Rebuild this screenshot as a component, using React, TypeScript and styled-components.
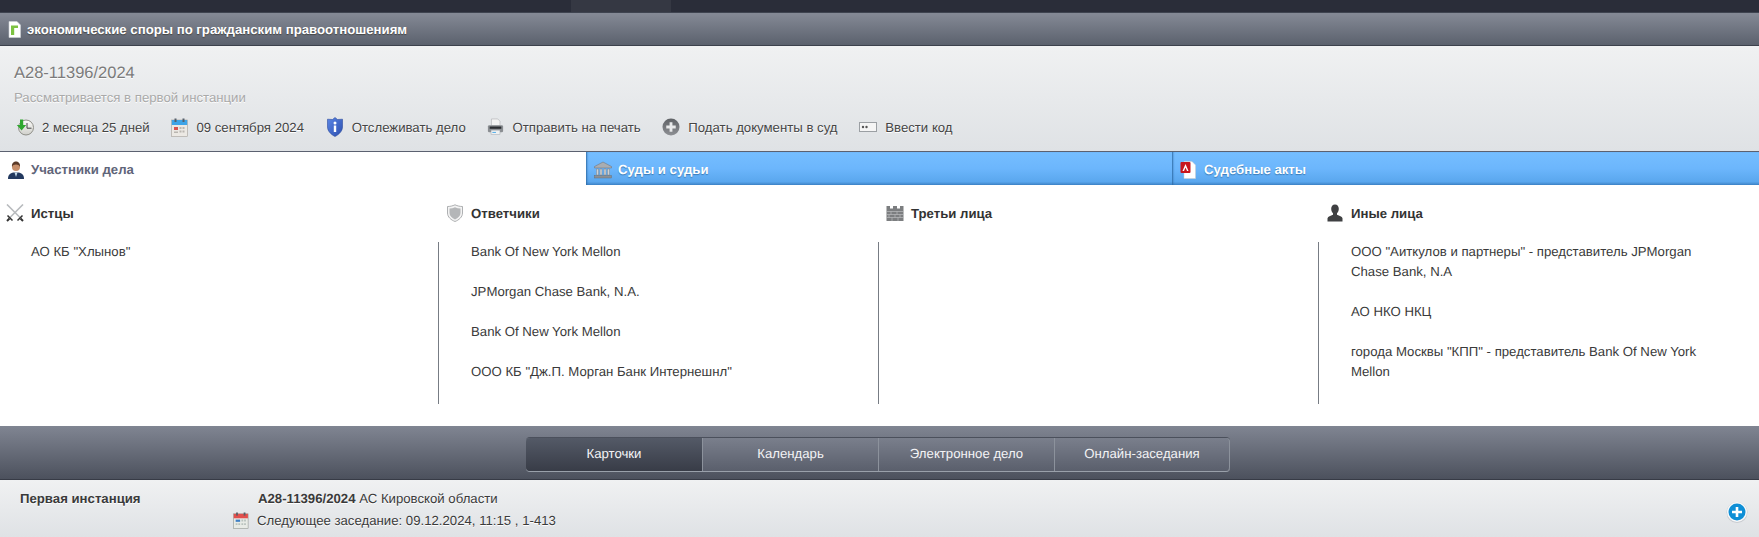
import React from "react";
import styled, { createGlobalStyle } from "styled-components";

const Global = createGlobalStyle`
  html, body { margin: 0; padding: 0; background: #fff; }
  body {
    font-family: "Liberation Sans", Arial, sans-serif;
    font-size: 13.2px;
    color: #333;
    overflow: hidden;
    text-rendering: geometricPrecision;
  }
`;

const Page = styled.div`
  width: 1759px;
  height: 537px;
  overflow: hidden;
  display: flex;
  flex-direction: column;
`;

const TopStrip = styled.div`
  height: 13px;
  background: #2a2d39;
  display: flex;
  padding-left: 571px;
`;
const TopSegment = styled.div`
  width: 100px;
  background: #353843;
`;

const CategoryBar = styled.div`
  height: 32px;
  box-sizing: content-box;
  border-top: 1px solid #3f4450;
  border-bottom: 1px solid #3c414c;
  margin-top: -1px;
  background: linear-gradient(#858a96, #5b616d);
  display: flex;
  align-items: center;
  padding-left: 8px;
  gap: 6px;
`;
const CategoryTitle = styled.span`
  font-size: 13.2px;
  font-weight: bold;
  color: #fff;
  text-shadow: 0 1px 1px #444;
  line-height: 16px;
  padding-top: 1px;
`;

const CaseHead = styled.div`
  height: 106px;
  box-sizing: border-box;
  padding: 17px 0 0 14px;
  background: linear-gradient(#f0f1f2, #dfe2e5);
  border-bottom: 1px solid #5b6170;
`;
const CaseNumber = styled.div`
  font-size: 16.5px;
  line-height: 21px;
  color: #7b7b7b;
  text-shadow: 0 1px 0 #fff;
`;
const CaseStatus = styled.div`
  font-size: 13.2px;
  line-height: 16px;
  margin-top: 6px;
  color: #a9a9a9;
  text-shadow: 0 1px 0 #fff;
`;
const Actions = styled.div`
  display: flex;
  margin-top: 11px;
  margin-left: 2px;
  height: 20px;
  align-items: center;
`;
const Action = styled.div`
  display: flex;
  align-items: center;
  gap: 8px;
  margin-right: 21.7px;
  font-size: 13.2px;
  color: #444;
  text-shadow: 0 1px 0 #fff;
  white-space: nowrap;
`;

const Tabs = styled.div`
  display: grid;
  grid-template-columns: 586px 586px 587px;
  height: 33px;
`;
const Tab = styled.div<{ $active?: boolean }>`
  display: flex;
  align-items: center;
  box-sizing: border-box;
  gap: 6px;
  font-size: 13.2px;
  font-weight: bold;
  padding: 2px 0 0 ${(p) => (p.$active ? 7 : 8)}px;
  color: ${(p) => (p.$active ? "#5f6579" : "#fff")};
  background: ${(p) =>
    p.$active ? "#fff" : "linear-gradient(#75beff 0%, #6cb6fc 50%, #5aa7ee 90%, #3d83c6 100%)"};
  box-shadow: ${(p) => (p.$active ? "none" : "inset 2px 0 2px -1px #2f6ca6")};
  text-shadow: ${(p) => (p.$active ? "none" : "0 1px 1px #3b7ab5")};
`;

const Columns = styled.div`
  display: grid;
  grid-template-columns: 440px 440px 440px 439px;
  height: 241px;
  background: #fff;
`;
const Column = styled.div`
  display: flex;
  flex-direction: column;
  padding-top: 18px;
`;
const ColumnHead = styled.div`
  display: flex;
  align-items: center;
  gap: 7px;
  height: 20px;
  padding-left: 6px;
  font-size: 13.2px;
  font-weight: bold;
  color: #333;
`;
const ColumnBody = styled.div<{ $rule?: boolean }>`
  margin-top: 19px;
  margin-right: 1px;
  height: 162px;
  box-sizing: border-box;
  padding: 0 ${(p) => (p.$rule ? 10 : 40)}px 0 31px;
  border-right: 1px solid ${(p) => (p.$rule ? "#777c84" : "transparent")};
`;
const Party = styled.div`
  font-size: 13.2px;
  line-height: 20px;
  color: #3a3a3a;
  margin-bottom: 20px;
`;

const BottomNav = styled.div`
  height: 54px;
  box-sizing: border-box;
  border-bottom: 1px solid #373b46;
  background: linear-gradient(#808592, #4c515d);
  display: flex;
  justify-content: center;
  align-items: flex-start;
  padding-top: 11px;
  padding-right: 3px;
`;
const Segments = styled.div`
  display: flex;
  height: 34px;
  border-radius: 4px;
  box-shadow: 0 1px 0 #99a0aa;
  border-top: 1px solid #4b505c;
  box-sizing: border-box;
`;
const Segment = styled.div<{ $active?: boolean; $last?: boolean }>`
  width: ${(p) => (p.$active ? 177 : p.$last ? 175 : 176)}px;
  box-sizing: border-box;
  display: flex;
  align-items: center;
  justify-content: center;
  font-size: 13.2px;
  color: #f3f3f5;
  padding-bottom: 2px;
  border-right: 1px solid #8c929c;
  border-radius: ${(p) => (p.$active ? "4px 0 0 4px" : p.$last ? "0 4px 4px 0" : "0")};
  background: ${(p) =>
    p.$active ? "linear-gradient(#545a67, #383c47)" : "linear-gradient(#7a7f8c, #5a5f6c)"};
`;

const Footer = styled.div`
  flex: 1;
  background: linear-gradient(#f0f1f2, #dfe2e5);
  display: grid;
  grid-template-columns: 233px 1fr 33px;
  padding-top: 10px;
  box-sizing: border-box;
`;
const InstanceLabel = styled.div`
  font-size: 13.2px;
  font-weight: bold;
  line-height: 18px;
  color: #3a3a3a;
  padding-left: 20px;
  text-shadow: 0 1px 0 #fff;
`;
const InstanceInfo = styled.div`
  font-size: 13.2px;
  color: #3a3a3a;
  text-shadow: 0 1px 0 #fff;
`;
const InstanceLine = styled.div`
  line-height: 18px;
  padding-left: 25px;
  b { font-weight: bold; }
`;
const NextHearing = styled.div`
  display: flex;
  align-items: center;
  gap: 8px;
  height: 20px;
  margin-top: 2px;
`;
const AddSlot = styled.div`
  padding-top: 11px;
`;

const Doc = () => (
  <svg width="13" height="17" viewBox="0 0 13 17">
    <path d="M1 .5h8l3.500 3.500v12.500H1z" fill="#fff" stroke="#cfd3d6" strokeWidth=".6" />
    <path d="M3 4.500h7v2.600H6.200V14H3z" fill="#7dc242" />
  </svg>
);
const Clock = () => (
  <svg width="18" height="18" viewBox="0 0 18 18">
    <defs>
      <linearGradient id="clockFace" x1="0" y1="0" x2="0" y2="1">
        <stop offset="0" stopColor="#fcfcfa" />
        <stop offset="1" stopColor="#cfcfca" />
      </linearGradient>
    </defs>
    <circle cx="10" cy="9.500" r="7.500" fill="url(#clockFace)" stroke="#8f8f88" strokeWidth="1" />
    <path d="M11 5v5.200h4.500" fill="none" stroke="#444" strokeWidth="1" />
    <path d="M4 1.500h3.200v5.500h3L5.600 12.500 .8 7h3.200z" fill="#2fa82f" />
  </svg>
);
const CalendarBlue = () => (
  <svg width="17" height="19" viewBox="0 0 17 19">
    <rect x=".5" y="2" width="16" height="16.500" fill="#ece9e4" stroke="#a5a09a" strokeWidth=".6" />
    <rect x=".8" y="2" width="15.400" height="5" fill="#3ea4e8" />
    <rect x="3.500" y=".5" width="2" height="3.500" fill="#55606c" />
    <rect x="11.500" y=".5" width="2" height="3.500" fill="#55606c" />
    <rect x="3" y="9" width="4" height="3" fill="#d9534f" />
    <path d="M8.500 9h2v2h-2zM11.500 9h2v2h-2zM8.500 12.500h2v2h-2zM11.500 12.500h2v2h-2zM3 13.500h4v1.500H3z" fill="#b9b6b0" />
  </svg>
);
const ShieldInfo = () => (
  <svg width="18" height="20" viewBox="0 0 18 20">
    <defs>
      <linearGradient id="shieldBlue" x1="0" y1="0" x2="1" y2="1">
        <stop offset="0" stopColor="#5b86e6" />
        <stop offset="1" stopColor="#2c4fae" />
      </linearGradient>
    </defs>
    <path d="M9 .5l2.500 2 5-.3V10c0 4-3.500 7.500-7.500 9.500C5 17.500 1.500 14 1.500 10V2.200l5 .3z" fill="url(#shieldBlue)" stroke="#2d4b9e" strokeWidth=".6" />
    <circle cx="9" cy="6" r="1.500" fill="#fff" />
    <rect x="7.800" y="8.500" width="2.400" height="6.500" fill="#fff" />
  </svg>
);
const Printer = () => (
  <svg width="17" height="18" viewBox="0 0 19 19">
    <path d="M5 .5h7l2.500 2.500V8H5z" fill="#f3f3f3" stroke="#a6a9ad" strokeWidth=".6" />
    <rect x="1" y="7.500" width="17" height="8" rx="1.500" fill="#8a8e92" />
    <rect x="3" y="9" width="13" height="2.500" fill="#2b2e32" />
    <rect x="4.500" y="13" width="10" height="5" fill="#eef1f2" stroke="#9ba0a4" strokeWidth=".5" />
    <rect x="6" y="15" width="4" height="1" fill="#3ea4e8" />
  </svg>
);
const PlusGray = () => (
  <svg width="18" height="18" viewBox="0 0 19 19">
    <defs>
      <linearGradient id="plusGray" x1="0" y1="0" x2="0" y2="1">
        <stop offset="0" stopColor="#5f6266" />
        <stop offset="1" stopColor="#8e9094" />
      </linearGradient>
    </defs>
    <circle cx="9.500" cy="9.500" r="9" fill="url(#plusGray)" />
    <path d="M8 4.500h3v3.500h3.500v3H11v3.500H8V11H4.500V8H8z" fill="#e8e9ea" />
  </svg>
);
const CodeBox = () => (
  <svg width="18" height="10" viewBox="0 0 18 10">
    <rect x=".5" y=".5" width="17" height="9" fill="#f5f5f5" stroke="#9b9fa3" />
    <circle cx="4" cy="5" r="1.200" fill="#555" />
    <circle cx="7.500" cy="5" r="1.200" fill="#555" />
  </svg>
);
const Person = () => (
  <svg width="18" height="18" viewBox="0 0 18 18">
    <path d="M1 18c0-4 2-6 5.500-6.500h5C15 12 17 14 17 18z" fill="#23395f" />
    <path d="M7.500 11.500L9 16l1.500-4.500z" fill="#c5dcea" />
    <circle cx="9" cy="6" r="4" fill="#c68e6a" />
    <path d="M5 6c-.5-4 2-5.500 4-5.500S13.500 2 13 6c-.8-1.800-2-2.500-4-2.500S5.800 4.200 5 6z" fill="#5a3a28" />
  </svg>
);
const Bank = () => (
  <svg width="18" height="18" viewBox="0 0 18 18">
    <path d="M9 1l8.500 4.500v1.500H.5V5.500z" fill="#a9adb2" stroke="#6b6f74" strokeWidth=".5" />
    <path d="M2.500 8h2v6h-2zM6 8h2v6H6zM10 8h2v6h-2zM13.500 8h2v6h-2z" fill="#d0d2d4" stroke="#777" strokeWidth=".4" />
    <rect x=".5" y="14.500" width="17" height="2.500" fill="#8c9095" stroke="#666" strokeWidth=".4" />
  </svg>
);
const Pdf = () => (
  <svg width="18" height="18" viewBox="0 0 18 18">
    <path d="M4 .5h8l3.500 3.500v13.500H4z" fill="#fff" stroke="#ccc" strokeWidth=".5" />
    <rect x=".5" y="1" width="10" height="11" rx="1" fill="#c8161d" />
    <path d="M5.500 3L8.500 10H7L5.500 6.500 4 10H2.500z" fill="#fff" />
  </svg>
);
const Swords = () => (
  <svg width="18" height="18" viewBox="0 0 18 18">
    <path d="M17 .5L4 13.500M1 .5L14 13.500" stroke="#b8bbbe" strokeWidth="1.600" />
    <path d="M1.500 11.500l5 5M16.500 11.500l-5 5" stroke="#333" strokeWidth="1.500" />
    <path d="M3.500 14.500L1 17M14.500 14.500L17 17" stroke="#333" strokeWidth="2" />
  </svg>
);
const ShieldGray = () => (
  <svg width="18" height="18" viewBox="0 0 18 18">
    <path d="M1.500 2.500C4 2.500 6.500 2 9 .8c2.500 1.200 5 1.700 7.500 1.700V9c0 4-3.500 7-7.500 8.500C5 16 1.500 13 1.500 9z" fill="#f3f3f3" stroke="#9a9da0" strokeWidth=".8" />
    <path d="M3.500 4.500c2 0 3.800-.4 5.500-1.200 1.700.8 3.500 1.200 5.500 1.200V9c0 2.800-2.500 5-5.500 6.500C6 14 3.500 11.800 3.500 9z" fill="#b4b6b8" />
  </svg>
);
const Wall = () => (
  <svg width="18" height="15" viewBox="0 0 18 15">
    <path d="M.5 0h3.500v2.500h3V0h4v2.500h3V0h3.500v15H.5z" fill="#7c7e80" />
    <path d="M.5 5.500h17M.5 8.500h17M.5 11.500h17M5 5.500v3M11 5.500v3M3 8.500v3M9 8.500v3M14 8.500v3M6 11.500v3.500M12 11.500v3.500" stroke="#c4c6c7" strokeWidth=".6" />
  </svg>
);
const Silhouette = () => (
  <svg width="18" height="18" viewBox="0 0 18 18">
    <path d="M9 .5c2.500 0 3.800 2 3.800 4.300 0 2-.9 3.500-1.800 4.500v1.500c2.500.8 5 1.800 5.500 3.500v3.200H1.500v-3.200c.5-1.700 3-2.700 5.500-3.500V9.300C6.100 8.300 5.200 6.800 5.200 4.800 5.200 2.500 6.500.5 9 .5z" fill="#3f4042" />
  </svg>
);
const CalendarRed = () => (
  <svg width="16" height="19" viewBox="0 0 18 19">
    <rect x=".5" y="2" width="16.500" height="16.500" fill="#e8ebe6" stroke="#8b8f8b" strokeWidth=".6" />
    <rect x=".8" y="2" width="16" height="5" fill="#e2504d" />
    <rect x="3.500" y=".5" width="2" height="3.500" fill="#5a5f66" />
    <rect x="12" y=".5" width="2" height="3.500" fill="#5a5f66" />
    <rect x="3" y="8.500" width="5" height="2.500" fill="#3f7fc4" />
    <path d="M9.500 8.500h2v2h-2zM12.500 8.500h2v2h-2zM3 12.500h2v2H3zM6 12.500h2v2H6zM9.500 12.500h2v2h-2zM12.500 12.500h2v2h-2z" fill="#b8c2bd" />
  </svg>
);
const PlusBlue = () => (
  <svg width="22" height="22" viewBox="0 0 22 22">
    <circle cx="11" cy="11.500" r="10.500" fill="#c9ccd0" />
    <circle cx="11" cy="11" r="10" fill="#f8f9fa" />
    <circle cx="11" cy="11" r="8.500" fill="#0f8fd6" />
    <path d="M9.700 6h2.600v3.700H16v2.600h-3.700V16H9.700v-3.700H6V9.700h3.700z" fill="#fff" />
  </svg>
);

const columns: { title: string; icon: React.ReactNode; items: string[]; rule: boolean }[] = [
  { title: "Истцы", icon: <Swords />, items: ['АО КБ "Хлынов"'], rule: true },
  {
    title: "Ответчики",
    icon: <ShieldGray />,
    items: [
      "Bank Of New York Mellon",
      "JPMorgan Chase Bank, N.A.",
      "Bank Of New York Mellon",
      'ООО КБ "Дж.П. Морган Банк Интернешнл"',
    ],
    rule: true,
  },
  { title: "Третьи лица", icon: <Wall />, items: [], rule: true },
  {
    title: "Иные лица",
    icon: <Silhouette />,
    items: [
      'ООО "Аиткулов и партнеры" - представитель JPMorgan Chase Bank, N.A',
      "АО НКО НКЦ",
      'города Москвы "КПП" - представитель Bank Of New York Mellon',
    ],
    rule: false,
  },
];

export default function App() {
  return (
    <Page>
      <Global />
      <TopStrip>
        <TopSegment />
      </TopStrip>
      <CategoryBar>
        <Doc />
        <CategoryTitle>экономические споры по гражданским правоотношениям</CategoryTitle>
      </CategoryBar>
      <CaseHead>
        <CaseNumber>А28-11396/2024</CaseNumber>
        <CaseStatus>Рассматривается в первой инстанции</CaseStatus>
        <Actions>
          <Action>
            <Clock />2 месяца 25 дней
          </Action>
          <Action>
            <CalendarBlue />09 сентября 2024
          </Action>
          <Action>
            <ShieldInfo />Отслеживать дело
          </Action>
          <Action>
            <Printer />Отправить на печать
          </Action>
          <Action>
            <PlusGray />Подать документы в суд
          </Action>
          <Action>
            <CodeBox />Ввести код
          </Action>
        </Actions>
      </CaseHead>
      <Tabs>
        <Tab $active>
          <Person />
          Участники дела
        </Tab>
        <Tab>
          <Bank />
          Суды и судьи
        </Tab>
        <Tab>
          <Pdf />
          Судебные акты
        </Tab>
      </Tabs>
      <Columns>
        {columns.map((c) => (
          <Column key={c.title}>
            <ColumnHead>
              {c.icon}
              {c.title}
            </ColumnHead>
            <ColumnBody $rule={c.rule}>
              {c.items.map((t, i) => (
                <Party key={i}>{t}</Party>
              ))}
            </ColumnBody>
          </Column>
        ))}
      </Columns>
      <BottomNav>
        <Segments>
          <Segment $active>Карточки</Segment>
          <Segment>Календарь</Segment>
          <Segment>Электронное дело</Segment>
          <Segment $last>Онлайн-заседания</Segment>
        </Segments>
      </BottomNav>
      <Footer>
        <InstanceLabel>Первая инстанция</InstanceLabel>
        <InstanceInfo>
          <InstanceLine>
            <b>А28-11396/2024</b> АС Кировской области
          </InstanceLine>
          <NextHearing>
            <CalendarRed />
            Следующее заседание: 09.12.2024, 11:15 , 1-413
          </NextHearing>
        </InstanceInfo>
        <AddSlot>
          <PlusBlue />
        </AddSlot>
      </Footer>
    </Page>
  );
}
